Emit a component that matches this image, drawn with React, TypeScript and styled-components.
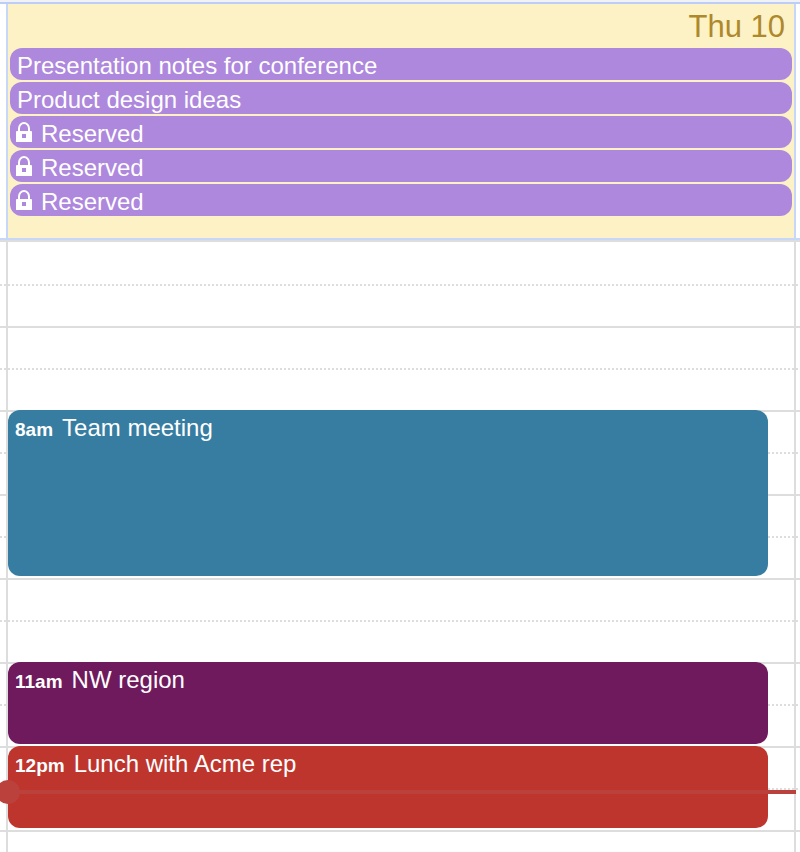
import React from "react";
import styled, { createGlobalStyle } from "styled-components";

const GlobalStyle = createGlobalStyle`
  * {
    box-sizing: border-box;
  }

  body {
    margin: 0;
    background: #ffffff;
    font-family: "Liberation Sans", Arial, Helvetica, sans-serif;
  }
`;

const GUTTERS = "6px minmax(0, 1fr) 4px";

const Calendar = styled.main`
  display: flex;
  flex-direction: column;
  height: 100vh;
  overflow: hidden;
`;

const TopStrip = styled.div`
  flex: none;
  height: 4px;
  background: #f1f2f4;
  border-bottom: 2px solid #bccdf9;
`;

const AllDaySection = styled.section`
  flex: none;
  display: grid;
  grid-template-columns: ${GUTTERS};
  border-bottom: 2px solid #c6d7fa;
`;

const AllDayColumn = styled.div`
  grid-column: 2;
  padding: 0 2px 22px;
  background: #fcf2c5;
  border: solid #c6d7fa;
  border-width: 0 2px;
`;

const DayTitle = styled.h1`
  margin: 0;
  padding: 5px 7px 3px 0;
  font-size: 31px;
  line-height: 36px;
  font-weight: 400;
  text-align: right;
  color: #ae882c;
`;

const AllDayList = styled.ul`
  display: flex;
  flex-direction: column;
  gap: 2px;
  margin: 0;
  padding: 0;
  list-style: none;
`;

const AllDayEvent = styled.button<{ $locked: boolean }>`
  display: flex;
  align-items: center;
  gap: 9px;
  width: 100%;
  height: 32px;
  padding: 4px 6px 0 ${(p) => (p.$locked ? "6px" : "7px")};
  border: 0;
  border-radius: 12px;
  background: #ae88dd;
  color: #ffffff;
  font: 400 24px/28px "Liberation Sans", Arial, Helvetica, sans-serif;
  text-align: left;
  cursor: pointer;
`;

const LockGlyph = styled.svg`
  flex: none;
  width: 16px;
  height: 20px;
  margin-bottom: 4px;
`;

const TimeGrid = styled.section`
  flex: none;
  display: grid;
  grid-template-columns: ${GUTTERS};
  grid-template-rows: repeat(15, 42px);
  border-top: 2px solid #dddddd;
`;

const Slot = styled.div<{ $row: number; $kind: "first" | "hour" | "half" }>`
  grid-column: 1 / -1;
  grid-row: ${(p) => p.$row};
  margin-right: ${(p) => (p.$kind === "half" ? "2px" : "0")};
  border-top: ${(p) =>
    p.$kind === "first" ? "0" : `2px ${p.$kind === "hour" ? "solid" : "dotted"} #dddddd`};
`;

const DayOutline = styled.div`
  grid-column: 2;
  grid-row: 1 / -1;
  border: solid #dddddd;
  border-width: 0 2px;
`;

const TimedEvent = styled.button<{ $start: number; $span: number; $color: string }>`
  grid-column: 2;
  grid-row: ${(p) => p.$start} / span ${(p) => p.$span};
  display: flex;
  align-items: baseline;
  align-content: flex-start;
  flex-wrap: wrap;
  gap: 9px;
  margin: 0 28px 2px 2px;
  padding: 4px 7px;
  border: 0;
  border-radius: 12px;
  background: ${(p) => p.$color};
  color: #ffffff;
  font: 400 24px/28px "Liberation Sans", Arial, Helvetica, sans-serif;
  text-align: left;
  cursor: pointer;
`;

const EventTime = styled.time`
  font-size: 19px;
  font-weight: 700;
`;

const NowLine = styled.div`
  grid-column: 2;
  grid-row: 14;
  position: relative;
  height: 4px;
  margin: 2px 0 0 2px;
  background: #ba413c;

  &::before {
    content: "";
    position: absolute;
    left: -12px;
    top: -10px;
    width: 24px;
    height: 24px;
    border-radius: 50%;
    background: inherit;
  }
`;

function LockIcon() {
  return (
    <LockGlyph viewBox="0 0 16 20" aria-hidden="true">
      <path d="M3 10V6.5a5 5.5 0 0 1 10 0V10" fill="none" stroke="#fff" strokeWidth="2" />
      <path
        d="M1 9h14a1 1 0 0 1 1 1v10H0V10a1 1 0 0 1 1-1zM6 12v4h4v-4z"
        fill="#fff"
        fillRule="evenodd"
      />
    </LockGlyph>
  );
}

const allDayEvents = [
  { id: 1, title: "Presentation notes for conference", locked: false },
  { id: 2, title: "Product design ideas", locked: false },
  { id: 3, title: "Reserved", locked: true },
  { id: 4, title: "Reserved", locked: true },
  { id: 5, title: "Reserved", locked: true },
];

const timedEvents = [
  { time: "8am", title: "Team meeting", start: 5, span: 4, color: "#377da1" },
  { time: "11am", title: "NW region", start: 11, span: 2, color: "#6f1a5c" },
  { time: "12pm", title: "Lunch with Acme rep", start: 13, span: 2, color: "#be352e" },
];

const slots = Array.from({ length: 15 }, (_, i) => i + 1);

function slotKind(row: number) {
  if (row === 1) return "first";
  return row % 2 === 0 ? "half" : "hour";
}

export default function App() {
  return (
    <>
      <GlobalStyle />
      <Calendar>
        <TopStrip />
        <AllDaySection>
          <AllDayColumn>
            <DayTitle>Thu 10</DayTitle>
            <AllDayList>
              {allDayEvents.map((event) => (
                <li key={event.id}>
                  <AllDayEvent type="button" $locked={event.locked}>
                    {event.locked && <LockIcon />}
                    <span>{event.title}</span>
                  </AllDayEvent>
                </li>
              ))}
            </AllDayList>
          </AllDayColumn>
        </AllDaySection>
        <TimeGrid>
          {slots.map((row) => (
            <Slot key={row} $row={row} $kind={slotKind(row)} />
          ))}
          <DayOutline />
          {timedEvents.map((event) => (
            <TimedEvent
              key={event.time}
              type="button"
              $start={event.start}
              $span={event.span}
              $color={event.color}
            >
              <EventTime>{event.time}</EventTime>
              <span>{event.title}</span>
            </TimedEvent>
          ))}
          <NowLine />
        </TimeGrid>
      </Calendar>
    </>
  );
}
